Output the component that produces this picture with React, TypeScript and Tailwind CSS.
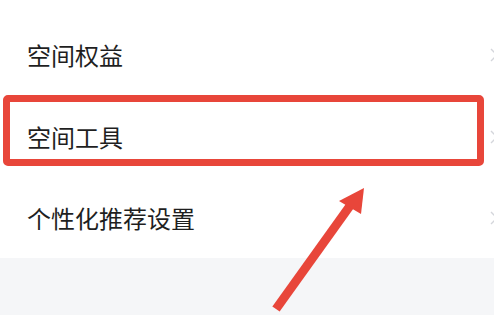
import React from "react";

function Chevron() {
  return (
    <svg width="8" height="14" viewBox="0 0 8 14" className="shrink-0">
      <path d="M1 1 L7 7 L1 13" fill="none" stroke="#d4d6db" strokeWidth="1.4" />
    </svg>
  );
}

function Row({ label, h }: { label: string; h: string }) {
  return (
    <div className={`flex items-center justify-between pl-[27px] ${h}`}>
      <span
        className="text-[24px] leading-none text-[#1f1f1f]"
        style={{ fontFamily: '"Noto Sans CJK SC", "Noto Sans", sans-serif' }}
      >
        {label}
      </span>
      <div className="w-[4px] overflow-hidden">
        <Chevron />
      </div>
    </div>
  );
}

export default function App() {
  return (
    <div className="relative h-[315px] w-[494px] overflow-hidden bg-[#f5f6f8]">
      <div className="bg-white pt-[14px]">
        <Row label="空间权益" h="h-[82px]" />
        <Row label="空间工具" h="h-[82px]" />
        <Row label="个性化推荐设置" h="h-[80px]" />
      </div>
      <div className="absolute left-[3px] top-[95px] h-[71px] w-[481px] rounded-[5px] border-[7px] border-[#e8463a]" />
      <svg
        className="absolute left-0 top-0"
        width="494"
        height="315"
        viewBox="0 0 494 315"
      >
        <line x1="276" y1="309" x2="352" y2="203" stroke="#e8463a" strokeWidth="9" strokeLinecap="butt" />
        <polygon points="364,188 339,201 361,214" fill="#e8463a" />
      </svg>
    </div>
  );
}
